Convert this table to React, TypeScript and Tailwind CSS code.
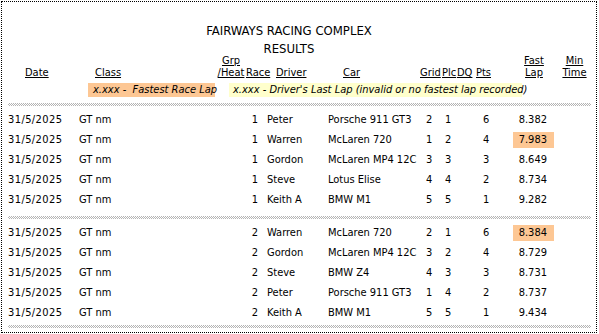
import React from "react";

type Row = {
  race: string;
  driver: string;
  car: string;
  grid: string;
  plc: string;
  pts: string;
  fast: string;
  hl?: boolean;
};

const group1: Row[] = [
  { race: "1", driver: "Peter", car: "Porsche 911 GT3", grid: "2", plc: "1", pts: "6", fast: "8.382" },
  { race: "1", driver: "Warren", car: "McLaren 720", grid: "1", plc: "2", pts: "4", fast: "7.983", hl: true },
  { race: "1", driver: "Gordon", car: "McLaren MP4 12C", grid: "3", plc: "3", pts: "3", fast: "8.649" },
  { race: "1", driver: "Steve", car: "Lotus Elise", grid: "4", plc: "4", pts: "2", fast: "8.734" },
  { race: "1", driver: "Keith A", car: "BMW M1", grid: "5", plc: "5", pts: "1", fast: "9.282" },
];

const group2: Row[] = [
  { race: "2", driver: "Warren", car: "McLaren 720", grid: "2", plc: "1", pts: "6", fast: "8.384", hl: true },
  { race: "2", driver: "Gordon", car: "McLaren MP4 12C", grid: "3", plc: "2", pts: "4", fast: "8.729" },
  { race: "2", driver: "Steve", car: "BMW Z4", grid: "4", plc: "3", pts: "3", fast: "8.731" },
  { race: "2", driver: "Peter", car: "Porsche 911 GT3", grid: "1", plc: "4", pts: "2", fast: "8.737" },
  { race: "2", driver: "Keith A", car: "BMW M1", grid: "5", plc: "5", pts: "1", fast: "9.434" },
];

function Separator() {
  return (
    <div className="ml-[6px] w-[583px] h-[3px] bg-[repeating-conic-gradient(#b4b4b4_0_25%,#ffffff_0_50%)] bg-[length:2px_2px]" />
  );
}

function DataRow({ r }: { r: Row }) {
  return (
    <div className="flex h-[20px] items-center whitespace-nowrap">
      <div className="w-[77px] pl-[6px] tracking-[0.4px]">31/5/2025</div>
      <div className="w-[167px]">GT nm</div>
      <div className="w-[12px] text-right">{r.race}</div>
      <div className="w-[70px] pl-[9px]">{r.driver}</div>
      <div className="w-[98px]">{r.car}</div>
      <div className="w-[19px]">{r.grid}</div>
      <div className="w-[38px]">{r.plc}</div>
      <div className="w-[30px]">{r.pts}</div>
      <div
        className={
          "w-[41px] h-[16px] leading-[16px] text-right pr-[7px] " +
          (r.hl ? "bg-[#fdc794]" : "")
        }
      >
        {r.fast}
      </div>
    </div>
  );
}

export default function App() {
  return (
    <div className="bg-white w-[599px] h-[334px] pt-[1px] pl-[1px] text-[11px] text-black font-['DejaVu_Sans_Condensed','DejaVu_Sans',sans-serif]">
      <div className="w-[596px] h-[332px] border border-dotted border-black">
        <div className="pt-[20px] pr-[20px] text-center text-[13px] leading-[18px]">
          <div>FAIRWAYS RACING COMPLEX</div>
          <div>RESULTS</div>
        </div>

        <div className="mt-[-3px] flex items-end leading-[12px] whitespace-nowrap">
          <div className="w-[93px] pl-[23px] underline">Date</div>
          <div className="w-[121px] underline">Class</div>
          <div className="w-[30px] flex flex-col items-center">
            <span className="underline">Grp</span>
            <span className="underline">/Heat</span>
          </div>
          <div className="w-[30px] underline">Race</div>
          <div className="w-[67px] underline">Driver</div>
          <div className="w-[77px] underline">Car</div>
          <div className="w-[22px] underline">Grid</div>
          <div className="w-[15px] underline">Plc</div>
          <div className="w-[19px] underline">DQ</div>
          <div className="w-[38px] underline">Pts</div>
          <div className="w-[40px] flex flex-col items-center">
            <span className="underline">Fast</span>
            <span className="underline">Lap</span>
          </div>
          <div className="w-[41px] flex flex-col items-center">
            <span className="underline">Min</span>
            <span className="underline">Time</span>
          </div>
        </div>

        <div className="mt-[4px] flex h-[14px] leading-[14px] italic whitespace-nowrap">
          <div className="ml-[86px] w-[127px] pl-[5px] bg-[#fdc794]">x.xxx -&nbsp; Fastest Race Lap</div>
          <div className="ml-[14px] w-[293px] pl-[4px] bg-[#ffffcc]">
            x.xxx - Driver's Last Lap (invalid or no fastest lap recorded)
          </div>
        </div>

        <div className="mt-[6px]">
          <Separator />
        </div>
        <div className="pt-[4px] pb-[6px]">
          {group1.map((r, i) => (
            <DataRow key={i} r={r} />
          ))}
        </div>
        <Separator />
        <div className="pt-[4px] pb-[2px]">
          {group2.map((r, i) => (
            <DataRow key={i} r={r} />
          ))}
        </div>
        <Separator />
      </div>
    </div>
  );
}
